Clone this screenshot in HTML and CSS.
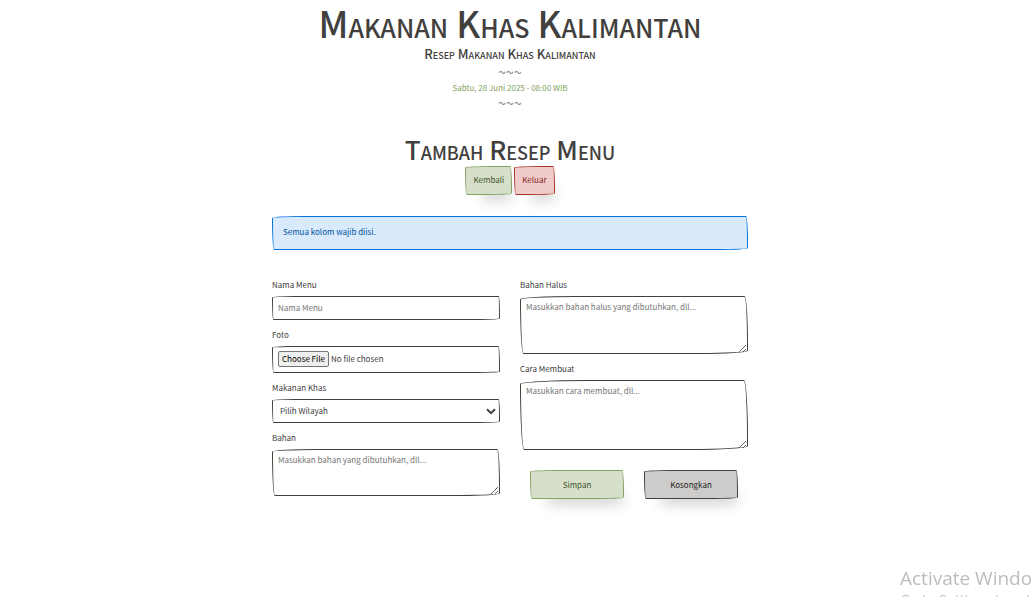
FILE: index.html
```html
<!DOCTYPE html>
<html lang="id">
<head>
<meta charset="utf-8">
<meta name="viewport" content="width=device-width, initial-scale=1">
<title>Makanan Khas Kalimantan</title>
<link rel="stylesheet" href="styles.css">
</head>
<body>
<div class="page">
  <header class="masthead">
    <h1 class="site-title">Makanan Khas Kalimantan</h1>
    <p class="tagline">Resep Makanan Khas Kalimantan</p>
    <p class="divider">~~~</p>
    <p class="date">Sabtu, 28 Juni 2025 - 08:00 WIB</p>
    <p class="divider">~~~</p>
  </header>
  <main>
    <h2 class="page-title">Tambah Resep Menu</h2>
    <nav class="nav">
      <a class="btn btn-success" href="#kembali">Kembali</a>
      <a class="btn btn-danger" href="#keluar">Keluar</a>
    </nav>
    <p class="alert">Semua kolom wajib diisi.</p>
    <form class="recipe">
      <div class="column">
        <div class="field">
          <label for="nama">Nama Menu</label>
          <input class="control" id="nama" type="text" placeholder="Nama Menu">
        </div>
        <div class="field">
          <label for="foto">Foto</label>
          <input class="control file" id="foto" type="file">
        </div>
        <div class="field">
          <label for="wilayah">Makanan Khas</label>
          <div class="select-wrap">
            <select class="control select" id="wilayah"><option>Pilih Wilayah</option></select>
            <svg class="chevron" viewBox="0 0 10 7" aria-hidden="true"><path d="M1 1.2 5 5.2 9 1.2"/></svg>
          </div>
        </div>
        <div class="field">
          <label for="bahan">Bahan</label>
          <textarea class="control area-small" id="bahan" placeholder="Masukkan bahan yang dibutuhkan, dll..."></textarea>
        </div>
      </div>
      <div class="column">
        <div class="field">
          <label for="halus">Bahan Halus</label>
          <textarea class="control area-medium" id="halus" placeholder="Masukkan bahan halus yang dibutuhkan, dll..."></textarea>
        </div>
        <div class="field">
          <label for="cara">Cara Membuat</label>
          <textarea class="control area-large" id="cara" placeholder="Masukkan cara membuat, dll..."></textarea>
        </div>
        <div class="actions">
          <button class="btn btn-success" type="submit">Simpan</button>
          <button class="btn btn-muted" type="reset">Kosongkan</button>
        </div>
      </div>
    </form>
  </main>
</div>
<aside class="watermark">
  <p class="watermark-title">Activate Windows</p>
  <p class="watermark-text">Go to Settings to activate Windows.</p>
</aside>
</body>
</html>
```
FILE: styles.css
```css
* {
  box-sizing: border-box;
}

body {
  min-height: 100vh;
  margin: 0;
  padding-right: 11px;
  background: #fff;
  color: #41403e;
  font: 8px/16px "Noto Sans CJK SC", "Open Sans", sans-serif;
}

h1, h2, p {
  margin: 0;
}

.page {
  max-width: 476px;
  margin: 0 auto;
}

.masthead {
  text-align: center;
}

.site-title,
.page-title,
.tagline {
  font-weight: 500;
  font-variant: small-caps;
  text-align: center;
  white-space: nowrap;
}

.site-title {
  font-size: 36px;
  line-height: 44px;
}

.tagline {
  font-size: 13px;
  line-height: 20px;
}

.divider {
  color: #868584;
  font-size: 14px;
  line-height: 16px;
}

.date {
  color: #86a361;
  line-height: 15px;
}

.page-title {
  margin-top: 24px;
  font-size: 26px;
  line-height: 28px;
}

.nav {
  display: flex;
  justify-content: center;
  gap: 2px;
  margin-top: 3px;
}

.btn {
  height: 29px;
  padding: 0 7px;
  border: 1px solid #41403e;
  border-radius: 128px 8px 113px 8px / 8px 113px 8px 128px;
  box-shadow: 8px 14px 13px -9px rgba(0, 0, 0, .2);
  color: #41403e;
  font: inherit;
  line-height: 26px;
  text-align: center;
  text-decoration: none;
}

.btn-success {
  border-color: #86a361;
  background: #d5dfca;
  color: #3f5427;
}

.btn-danger {
  border-color: #a7342d;
  background: #f0cbc9;
  color: #7f2722;
}

.btn-muted {
  background: #cdcccb;
  color: #1c1c1b;
}

.alert {
  margin-top: 21px;
  padding: 7px 10px 9px;
  border: 1px solid #0071de;
  border-radius: 128px 8px 113px 8px / 8px 113px 8px 128px;
  background: #d8eafc;
  color: #00519e;
}

.recipe {
  display: grid;
  grid-template-columns: 1fr 1fr;
  gap: 20px;
  margin-top: 27px;
}

.column {
  display: flex;
  flex-direction: column;
  gap: 7px;
}

.field {
  display: flex;
  flex-direction: column;
  gap: 3px;
}

.control {
  display: block;
  width: 100%;
  height: 24px;
  padding: 2px 5px 4px;
  border: 1px solid #41403e;
  border-radius: 128px 8px 113px 8px / 8px 113px 8px 128px;
  background: #fff;
  color: #41403e;
  font: inherit;
}

.control::placeholder {
  color: #757575;
}

.file {
  height: 27px;
  padding-top: 4px;
}

.file::file-selector-button {
  height: 16px;
  margin: 0 2px 0 0;
  padding: 0 3px;
  border: 1px solid #767676;
  border-radius: 2px;
  background: #efefef;
  color: #000;
  font: inherit;
  line-height: 14px;
}

.select-wrap {
  display: grid;
  align-items: center;
}

.select {
  grid-area: 1 / 1;
  padding: 3px 7px;
  appearance: none;
}

.chevron {
  grid-area: 1 / 1;
  justify-self: end;
  width: 10px;
  height: 7px;
  margin-right: 4px;
  fill: none;
  stroke: #41403e;
  stroke-width: 2;
  pointer-events: none;
}

.area-small {
  height: 47px;
}

.area-medium {
  height: 58px;
}

.area-large {
  height: 70px;
}

.actions {
  display: grid;
  grid-template-columns: 1fr 1fr;
  gap: 20px;
  padding: 13px 10px 0;
}

.watermark {
  position: fixed;
  top: 566px;
  left: calc(100% - 131px);
  color: #bdbdbd;
  font-family: "Open Sans", sans-serif;
  white-space: nowrap;
  pointer-events: none;
}

.watermark-title {
  font-size: 19px;
  line-height: 24px;
}

.watermark-text {
  font-size: 14px;
  line-height: 20px;
}
```
